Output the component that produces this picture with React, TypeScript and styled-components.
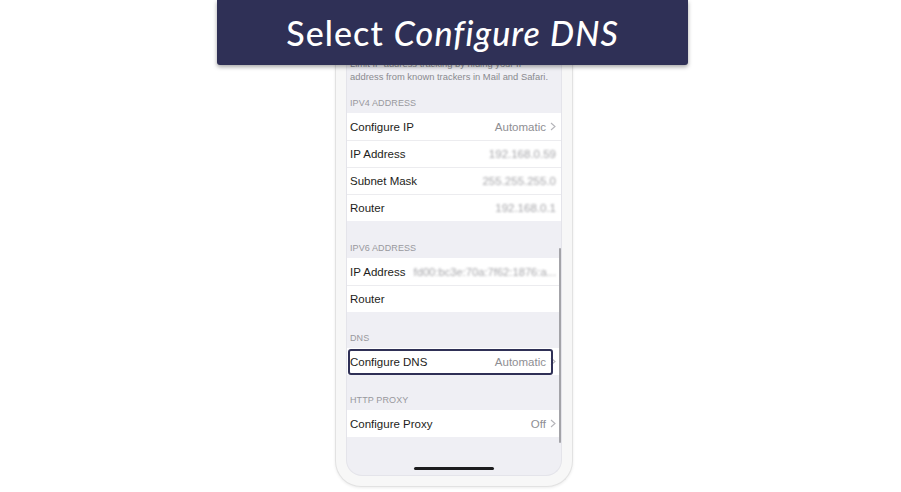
import React from 'react';
import styled, { createGlobalStyle } from 'styled-components';

const GlobalStyle = createGlobalStyle`
    html, body {
        margin: 0;
        padding: 0;
        background: #ffffff;
    }
    body {
        font-family: "Liberation Sans", Arial, sans-serif;
    }
`;

const Page = styled.div`
    position: relative;
    width: 901px;
    height: 492px;
    overflow: hidden;
    display: flex;
    justify-content: center;
    padding-left: 7px;
    box-sizing: border-box;
`;

const Banner = styled.div`
    position: absolute;
    top: 0;
    left: 217px;
    width: 471px;
    height: 65px;
    background: #2f3056;
    border-radius: 0 0 3px 3px;
    box-shadow: 0 2px 4px rgba(0, 0, 0, 0.35);
    display: flex;
    align-items: center;
    justify-content: center;
    color: #ffffff;
    font-family: Lato, "Open Sans", sans-serif;
    font-size: 34px;
    font-weight: 500;
    letter-spacing: 1.1px;
    z-index: 2;

    em {
        font-style: italic;
        margin-left: 10px;
    }
`;

const Phone = styled.div`
    width: 216px;
    height: 476px;
    padding: 0 10px 10px;
    background: #f7f7f7;
    border: 1px solid #e2e2e2;
    border-top: none;
    border-radius: 0 0 26px 26px;
    box-shadow: 0 1px 3px rgba(0, 0, 0, 0.08);
`;

const Screen = styled.div`
    position: relative;
    height: 100%;
    background: #efeff4;
    border: 1px solid #e4e4ea;
    border-top: none;
    border-radius: 0 0 16px 16px;
    box-sizing: border-box;
    display: flex;
    flex-direction: column;
    padding-top: 57px;
`;

const Description = styled.p`
    margin: 0;
    padding: 0 4px 0 3px;
    font-size: 9.4px;
    line-height: 13px;
    color: #8a8a8f;
    white-space: nowrap;
`;

const SectionHeader = styled.div<{ $height: number }>`
    height: ${(p) => p.$height}px;
    display: flex;
    align-items: flex-end;
    padding: 0 0 5px 3px;
    box-sizing: border-box;
    font-size: 9px;
    color: #98989d;
    letter-spacing: 0.1px;
`;

const Group = styled.div`
    background: #ffffff;
    display: flex;
    flex-direction: column;
`;

const Row = styled.div`
    position: relative;
    height: 27px;
    box-sizing: border-box;
    display: flex;
    align-items: center;
    padding: 0 5px 0 3px;
    gap: 4px;
    font-size: 11.5px;
    color: #1d1d20;
    & + & {
        border-top: 1px solid #ececef;
    }
`;

const Label = styled.span`
    white-space: nowrap;
`;

const Value = styled.span<{ $blur?: boolean; $small?: boolean }>`
    margin-left: auto;
    color: #8e8e93;
    white-space: nowrap;
    font-size: ${(p) => (p.$small ? '11.2px' : 'inherit')};
    filter: ${(p) => (p.$blur ? 'blur(1.1px)' : 'none')};
    opacity: ${(p) => (p.$blur ? 0.8 : 1)};
`;

const Highlight = styled.div`
    position: absolute;
    left: 1px;
    right: 8px;
    top: 1px;
    bottom: 0;
    border: 2px solid #2f3056;
    border-radius: 3px;
`;

const ScrollBar = styled.div`
    position: absolute;
    right: 0;
    top: 248px;
    width: 2px;
    height: 195px;
    background: #a3a3a8;
    border-radius: 1px;
`;

const HomeIndicator = styled.div`
    margin: auto auto 5px;
    width: 80px;
    height: 3px;
    border-radius: 2px;
    background: #1c1c1e;
`;

const Chevron: React.FC = () => (
    <svg width="6" height="9" viewBox="0 0 6 9" style={{ flexShrink: 0 }}>
        <polyline points="1,1 5,4.5 1,8" fill="none" stroke="#b4b4b9" strokeWidth="1.1" />
    </svg>
);

const App: React.FC = () => {
    return (
        <Page>
            <GlobalStyle />
            <Banner>
                Select<em>Configure DNS</em>
            </Banner>
            <Phone>
                <Screen>
                    <Description>
                        Limit IP address tracking by hiding your IP
                        <br />
                        address from known trackers in Mail and Safari.
                    </Description>

                    <SectionHeader $height={30}>IPV4 ADDRESS</SectionHeader>
                    <Group>
                        <Row>
                            <Label>Configure IP</Label>
                            <Value>Automatic</Value>
                            <Chevron />
                        </Row>
                        <Row>
                            <Label>IP Address</Label>
                            <Value $blur>192.168.0.59</Value>
                        </Row>
                        <Row>
                            <Label>Subnet Mask</Label>
                            <Value $blur>255.255.255.0</Value>
                        </Row>
                        <Row>
                            <Label>Router</Label>
                            <Value $blur>192.168.0.1</Value>
                        </Row>
                    </Group>

                    <SectionHeader $height={37}>IPV6 ADDRESS</SectionHeader>
                    <Group>
                        <Row>
                            <Label>IP Address</Label>
                            <Value $blur $small>fd00:bc3e:70a:7f62:1876:a...</Value>
                        </Row>
                        <Row>
                            <Label>Router</Label>
                        </Row>
                    </Group>

                    <SectionHeader $height={36}>DNS</SectionHeader>
                    <Group>
                        <Row>
                            <Label>Configure DNS</Label>
                            <Value>Automatic</Value>
                            <Chevron />
                            <Highlight />
                        </Row>
                    </Group>

                    <SectionHeader $height={35}>HTTP PROXY</SectionHeader>
                    <Group>
                        <Row>
                            <Label>Configure Proxy</Label>
                            <Value>Off</Value>
                            <Chevron />
                        </Row>
                    </Group>

                    <ScrollBar />
                    <HomeIndicator />
                </Screen>
            </Phone>
        </Page>
    );
};

export default App;
